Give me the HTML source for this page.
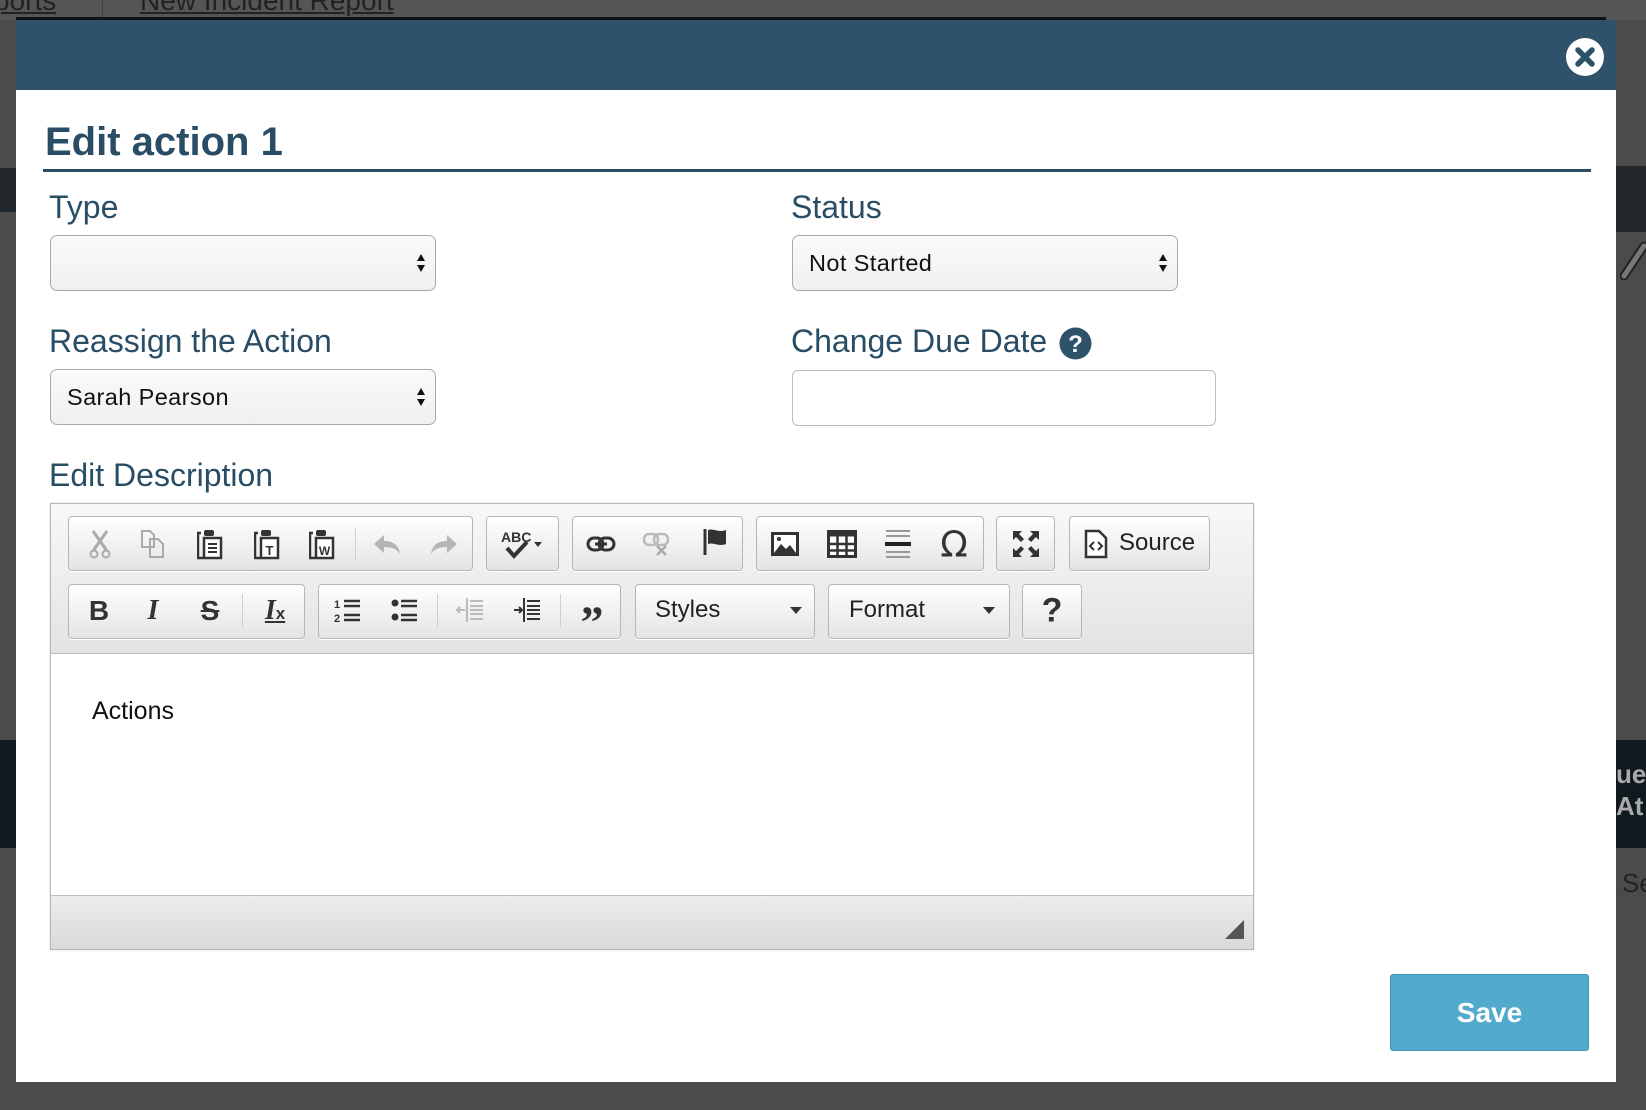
<!DOCTYPE html>
<html><head><meta charset="utf-8">
<style>
*{box-sizing:border-box;margin:0;padding:0}
body{width:1646px;height:1110px;overflow:hidden;background:#4b4b4b;font-family:"Liberation Sans",Arial,sans-serif;position:relative}
.abs{position:absolute}
.lbl{position:absolute;color:#2a4d66;font-size:32px;line-height:34px}
.sel{position:absolute;border:1px solid #a9a9a9;border-radius:7px;background:linear-gradient(#fafafa,#f0f0f0);box-shadow:inset 0 1px 0 #fff;font-size:23.5px;letter-spacing:0.4px;color:#111;padding-left:16px;line-height:54px}
.arr{position:absolute;right:9px;top:16px;width:10px;height:22px}
.grp{position:absolute;border:1px solid #b6b6b6;border-radius:4px;background:linear-gradient(#fff,#e4e4e4);box-shadow:0 1px 0 #fff}
.ic{position:absolute;transform:translate(-50%,-50%)}
.sep{position:absolute;width:1px;background:#cfcfcf}
</style></head><body>
<div class="abs" style="left:0;top:0;width:1646px;height:20px;background:#555"></div>
<div class="abs" style="left:-6px;top:-15px;font-size:28px;color:#222;text-decoration:underline">ports</div>
<div class="abs" style="left:102px;top:0;width:1px;height:18px;background:#444"></div>
<div class="abs" style="left:140px;top:-15px;font-size:28px;color:#222;text-decoration:underline">New Incident Report</div>
<div class="abs" style="left:16px;top:17px;width:1590px;height:3px;background:#111"></div>
<div class="abs" style="left:0;top:168px;width:16px;height:44px;background:#22272b"></div>
<div class="abs" style="left:0;top:740px;width:16px;height:108px;background:#0f1a1f"></div>
<div class="abs" style="left:1616px;top:166px;width:30px;height:66px;background:#22272b"></div>
<svg class="abs" style="left:1620px;top:240px" width="26" height="40"><path d="M4 36L24 6" stroke="#222" stroke-width="9" stroke-linecap="round"/><path d="M4 36L24 6" stroke="#777" stroke-width="5" stroke-linecap="round"/></svg>
<div class="abs" style="left:1616px;top:740px;width:30px;height:108px;background:#0f1a1f"></div>
<div class="abs" style="left:1616px;top:758px;font-size:26px;color:#aaa;font-weight:bold;line-height:32px">ue<br>At</div>
<div class="abs" style="left:1622px;top:868px;font-size:26px;color:#222">Se</div>

<div class="abs" style="left:16px;top:20px;width:1600px;height:1062px;background:#fff"></div>
<div class="abs" style="left:16px;top:20px;width:1600px;height:70px;background:#2d5269"></div>
<svg class="abs" style="left:1565px;top:37px" width="40" height="40" viewBox="0 0 40 40"><circle cx="20" cy="20" r="19" fill="#fff"/><path d="M13 13L27 27M27 13L13 27" stroke="#2d5269" stroke-width="5.5" stroke-linecap="round"/></svg>

<div class="abs" style="left:45px;top:120px;font-size:40px;font-weight:bold;color:#2a4d66;line-height:44px">Edit action 1</div>
<div class="abs" style="left:43px;top:169px;width:1548px;height:3px;background:#2d4d63"></div>

<div class="lbl" style="left:49px;top:190px">Type</div>
<div class="sel" style="left:50px;top:235px;width:386px;height:56px"><svg class="arr" viewBox="0 0 10 22"><path d="M5 2L9 9H1Z M5 20L9 13H1Z" fill="#111"/></svg></div>
<div class="lbl" style="left:791px;top:190px">Status</div>
<div class="sel" style="left:792px;top:235px;width:386px;height:56px">Not Started<svg class="arr" viewBox="0 0 10 22"><path d="M5 2L9 9H1Z M5 20L9 13H1Z" fill="#111"/></svg></div>

<div class="lbl" style="left:49px;top:324px">Reassign the Action</div>
<div class="sel" style="left:50px;top:369px;width:386px;height:56px">Sarah Pearson<svg class="arr" viewBox="0 0 10 22"><path d="M5 2L9 9H1Z M5 20L9 13H1Z" fill="#111"/></svg></div>
<div class="lbl" style="left:791px;top:324px">Change Due Date</div>
<svg class="abs" style="left:1059px;top:327px" width="33" height="33" viewBox="0 0 33 33"><circle cx="16.5" cy="16.5" r="16" fill="#2d5269"/><text x="16.5" y="25" text-anchor="middle" font-family="Liberation Sans" font-weight="bold" font-size="24" fill="#fff">?</text></svg>
<div class="abs" style="left:792px;top:370px;width:424px;height:56px;border:1px solid #bbb;border-radius:6px;background:#fff"></div>

<div class="lbl" style="left:49px;top:458px">Edit Description</div>

<div class="abs" style="left:50px;top:503px;width:1204px;height:447px;border:1px solid #b6b6b6;background:#fff;box-shadow:0 0 2px rgba(0,0,0,.15)"></div>
<div class="abs" style="left:51px;top:504px;width:1202px;height:150px;background:linear-gradient(#f8f8f8,#e3e3e3);border-bottom:1px solid #bcbcbc"></div>
<div class="abs" style="left:51px;top:895px;width:1202px;height:54px;background:linear-gradient(#ececec,#d9d9d9);border-top:1px solid #bcbcbc"></div>
<svg class="abs" style="left:1224px;top:919px" width="22" height="22"><path d="M20 1V20H1Z" fill="#555"/></svg>
<div class="abs" style="left:92px;top:697px;font-size:25px;color:#111">Actions</div>

<div class="grp" style="left:68px;top:516px;width:405px;height:55px"></div>
<div class="grp" style="left:486px;top:516px;width:73px;height:55px"></div>
<div class="grp" style="left:572px;top:516px;width:171px;height:55px"></div>
<div class="grp" style="left:756px;top:516px;width:228px;height:55px"></div>
<div class="grp" style="left:996px;top:516px;width:59px;height:55px"></div>
<div class="grp" style="left:1069px;top:516px;width:141px;height:55px"></div>
<div class="sep" style="left:355px;top:528px;height:32px"></div>
<div class="grp" style="left:68px;top:584px;width:237px;height:55px"></div>
<div class="grp" style="left:318px;top:584px;width:303px;height:55px"></div>
<div class="grp" style="left:635px;top:584px;width:180px;height:55px"></div>
<div class="grp" style="left:828px;top:584px;width:182px;height:55px"></div>
<div class="grp" style="left:1022px;top:584px;width:60px;height:55px"></div>
<div class="sep" style="left:242px;top:594px;height:34px"></div>
<div class="sep" style="left:437px;top:594px;height:34px"></div>
<div class="sep" style="left:560px;top:594px;height:34px"></div>

<svg class="ic" style="left:100px;top:544px" width="24" height="30" viewBox="0 0 24 30"><path d="M5 2L19 22M19 2L5 22" stroke="#aaa" stroke-width="3"/><circle cx="6" cy="25" r="3.5" fill="none" stroke="#aaa" stroke-width="2"/><circle cx="18" cy="25" r="3.5" fill="none" stroke="#aaa" stroke-width="2"/></svg>
<svg class="ic" style="left:153px;top:544px" width="26" height="30" viewBox="0 0 26 30"><path d="M2 2H10L14 6V18H2Z M10 10H18L23 15V28H10Z" fill="none" stroke="#aaa" stroke-width="2"/></svg>
<svg class="ic" style="left:210px;top:544px" width="26" height="32" viewBox="0 0 26 32"><path d="M4 5H1V30H6" fill="none" stroke="#333" stroke-width="2.5"/><rect x="7" y="2" width="10" height="6" rx="2" fill="#333"/><rect x="7" y="10" width="17" height="20" fill="#fff" stroke="#333" stroke-width="2.5"/><path d="M11 16H20M11 20H20M11 24H20" stroke="#333" stroke-width="2"/></svg>
<svg class="ic" style="left:267px;top:544px" width="26" height="32" viewBox="0 0 26 32"><path d="M4 5H1V30H6" fill="none" stroke="#333" stroke-width="2.5"/><rect x="7" y="2" width="10" height="6" rx="2" fill="#333"/><rect x="7" y="10" width="17" height="20" fill="#fff" stroke="#333" stroke-width="2.5"/><text x="15.5" y="27" text-anchor="middle" font-size="13" font-weight="bold" font-family="Liberation Sans" fill="#333">T</text></svg>
<svg class="ic" style="left:322px;top:544px" width="26" height="32" viewBox="0 0 26 32"><path d="M4 5H1V30H6" fill="none" stroke="#333" stroke-width="2.5"/><rect x="7" y="2" width="10" height="6" rx="2" fill="#333"/><rect x="7" y="10" width="17" height="20" fill="#fff" stroke="#333" stroke-width="2.5"/><text x="15.5" y="27" text-anchor="middle" font-size="12" font-weight="bold" font-family="Liberation Sans" fill="#333">W</text></svg>
<svg class="ic" style="left:387px;top:544px" width="30" height="22" viewBox="0 0 30 22"><path d="M12 2L2 11L12 20V14C20 14 25 16 28 21C27 13 22 8 12 8Z" fill="#b5b5b5"/></svg>
<svg class="ic" style="left:444px;top:544px" width="30" height="22" viewBox="0 0 30 22"><path d="M18 2L28 11L18 20V14C10 14 5 16 2 21C3 13 8 8 18 8Z" fill="#b5b5b5"/></svg>
<svg class="ic" style="left:523px;top:544px" width="44" height="32" viewBox="0 0 44 32"><text x="0" y="14" font-size="14" font-weight="bold" font-family="Liberation Sans" fill="#333">ABC</text><path d="M6 20L13 28L26 14" fill="none" stroke="#333" stroke-width="4"/><path d="M33 14H41L37 19Z" fill="#333"/></svg>
<svg class="ic" style="left:601px;top:544px" width="30" height="20" viewBox="0 0 30 20"><rect x="2" y="4" width="15" height="12" rx="6" fill="none" stroke="#333" stroke-width="3"/><rect x="13" y="4" width="15" height="12" rx="6" fill="none" stroke="#333" stroke-width="3"/><path d="M9 10H21" stroke="#333" stroke-width="3"/></svg>
<svg class="ic" style="left:657px;top:544px" width="30" height="26" viewBox="0 0 30 26"><rect x="2" y="3" width="14" height="11" rx="5" fill="none" stroke="#bbb" stroke-width="2.5"/><rect x="12" y="3" width="14" height="11" rx="5" fill="none" stroke="#bbb" stroke-width="2.5"/><path d="M15 15L24 24M24 15L15 24" stroke="#aaa" stroke-width="2.5"/></svg>
<svg class="ic" style="left:715px;top:542px" width="26" height="30" viewBox="0 0 26 30"><path d="M3 2V28" stroke="#333" stroke-width="3"/><path d="M6 3C12 1 16 6 24 3V17C16 20 12 15 6 17Z" fill="#333"/></svg>
<svg class="ic" style="left:785px;top:544px" width="28" height="24" viewBox="0 0 28 24"><rect x="1.5" y="1.5" width="25" height="21" fill="#fff" stroke="#333" stroke-width="3"/><path d="M3 21L10 12L15 17L19 13L25 21Z" fill="#333"/><circle cx="8" cy="7" r="2" fill="#333"/></svg>
<svg class="ic" style="left:842px;top:544px" width="30" height="28" viewBox="0 0 30 28"><rect x="1.5" y="1.5" width="27" height="25" fill="#fff" stroke="#333" stroke-width="3"/><rect x="1.5" y="1.5" width="27" height="5" fill="#333"/><path d="M10.5 6V27M19.5 6V27M2 14H28M2 20.5H28" stroke="#333" stroke-width="2.5"/></svg>
<svg class="ic" style="left:898px;top:544px" width="28" height="30" viewBox="0 0 28 30"><path d="M2 2H26M2 7H26M2 23H26M2 28H26" stroke="#999" stroke-width="2"/><path d="M1 15H27" stroke="#222" stroke-width="4"/></svg>
<div class="ic" style="left:954px;top:545px;font-size:36px;color:#333;font-family:'DejaVu Sans',sans-serif">Ω</div>
<svg class="ic" style="left:1026px;top:544px" width="30" height="30" viewBox="0 0 30 30"><path d="M2 2H11L8 5L13 10L10 13L5 8L2 11Z M28 2V11L25 8L20 13L17 10L22 5L19 2Z M2 28V19L5 22L10 17L13 20L8 25L11 28Z M28 28H19L22 25L17 20L20 17L25 22L28 19Z" fill="#333"/></svg>
<svg class="ic" style="left:1096px;top:544px" width="24" height="30" viewBox="0 0 24 30"><path d="M2 2H15L22 9V28H2Z" fill="#fff" stroke="#333" stroke-width="2.5"/><path d="M10 13L6 17L10 21M14 13L18 17L14 21" fill="none" stroke="#333" stroke-width="2"/></svg>
<div class="abs" style="left:1119px;top:529px;font-size:24px;color:#222">Source</div>

<div class="ic" style="left:99px;top:611px;font-size:28px;font-weight:bold;color:#333">B</div>
<div class="ic" style="left:153px;top:611px;font-size:28px;font-weight:bold;font-style:italic;font-family:'Liberation Serif',serif;color:#333">I</div>
<div class="ic" style="left:210px;top:611px;font-size:28px;font-weight:bold;color:#333;text-decoration:line-through">S</div>
<div class="ic" style="left:275px;top:611px;font-size:28px;font-weight:bold;font-style:italic;font-family:'Liberation Serif',serif;color:#333;text-decoration:underline">I<span style="font-size:17px;font-style:normal;font-family:'Liberation Sans';text-decoration:none">x</span></div>
<svg class="ic" style="left:347px;top:610px" width="28" height="28" viewBox="0 0 28 28"><text x="1" y="12" font-size="11" font-weight="bold" font-family="Liberation Sans" fill="#333">1</text><text x="1" y="26" font-size="11" font-weight="bold" font-family="Liberation Sans" fill="#333">2</text><path d="M11 5H27M11 10H27M11 19H27M11 24H27" stroke="#333" stroke-width="2.5"/></svg>
<svg class="ic" style="left:404px;top:610px" width="28" height="28" viewBox="0 0 28 28"><circle cx="5" cy="7" r="3.5" fill="#333"/><circle cx="5" cy="21" r="3.5" fill="#333"/><path d="M11 5H27M11 10H27M11 19H27M11 24H27" stroke="#333" stroke-width="2.5"/></svg>
<svg class="ic" style="left:470px;top:610px" width="28" height="28" viewBox="0 0 28 28"><path d="M11 2V26" stroke="#bbb" stroke-width="2"/><path d="M1 14H9M4 11L1 14L4 17" fill="none" stroke="#bbb" stroke-width="2"/><path d="M14 5H27M14 10H27M14 14H27M14 18H27M14 23H27" stroke="#bbb" stroke-width="2"/></svg>
<svg class="ic" style="left:527px;top:610px" width="28" height="28" viewBox="0 0 28 28"><path d="M11 2V26" stroke="#333" stroke-width="2"/><path d="M1 14H9M6 11L9 14L6 17" fill="none" stroke="#333" stroke-width="2"/><path d="M14 5H27M14 10H27M14 14H27M14 18H27M14 23H27" stroke="#333" stroke-width="2"/></svg>
<div class="ic" style="left:591px;top:622px;font-size:46px;font-weight:bold;color:#333;font-family:'Liberation Serif',serif;letter-spacing:-2px">”</div>
<div class="abs" style="left:655px;top:596px;font-size:24px;color:#222">Styles</div>
<svg class="abs" style="left:790px;top:607px" width="12" height="7"><path d="M0 0H12L6 7Z" fill="#333"/></svg>
<div class="abs" style="left:849px;top:596px;font-size:24px;color:#222">Format</div>
<svg class="abs" style="left:983px;top:607px" width="12" height="7"><path d="M0 0H12L6 7Z" fill="#333"/></svg>
<div class="ic" style="left:1052px;top:611px;font-size:34px;font-weight:bold;color:#333">?</div>

<div class="abs" style="left:1390px;top:974px;width:199px;height:77px;background:#52abcc;border:1px solid #3f98b8;border-radius:3px;color:#fff;font-size:28px;font-weight:bold;text-align:center;line-height:75px">Save</div>
</body></html>
